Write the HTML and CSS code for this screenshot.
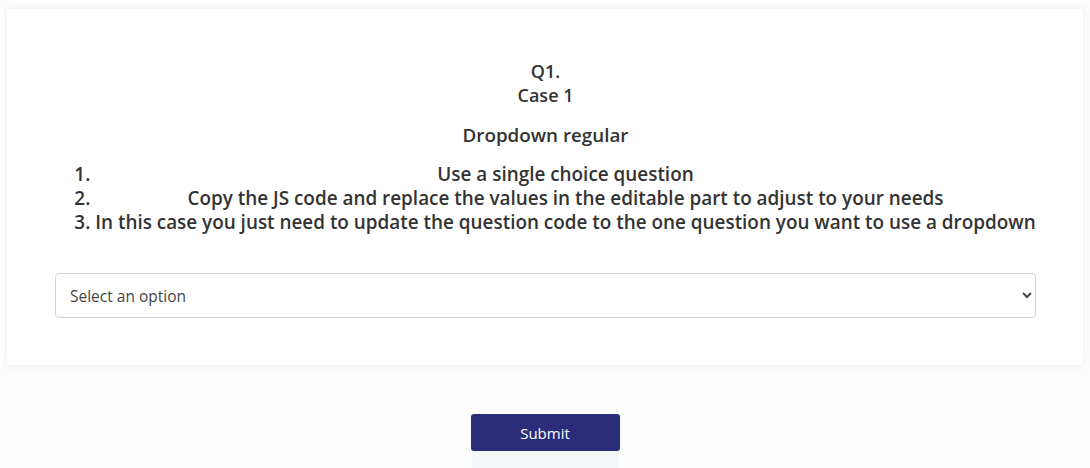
FILE: index.html
```html
<!DOCTYPE html>
<html lang="en">
<head>
    <meta charset="UTF-8">
    <meta name="viewport" content="width=device-width, initial-scale=1.0">
    <title>Q1. Case 1</title>
    <link rel="stylesheet" href="styles.css">
</head>
<body>
    <div class="card">
        <div class="question-title">
            <div>Q1.</div>
            <div>Case 1</div>
        </div>
        <div class="question-sub">Dropdown regular</div>
        <ol class="steps">
            <li>Use a single choice question</li>
            <li>Copy the JS code and replace the values in the editable part to adjust to your needs</li>
            <li>In this case you just need to update the question code to the one question you want to use a dropdown</li>
        </ol>
        <select class="dropdown">
            <option>Select an option</option>
            <option>Option 1</option>
            <option>Option 2</option>
        </select>
    </div>

    <div class="actions">
        <button class="submit">Submit</button>
        <div class="submit-shadow"></div>
    </div>
</body>
</html>
```

FILE: styles.css
```css
body {
    font-family: "Open Sans", "Noto Sans", sans-serif;
    margin: 0;
    padding: 9px 7px 0 7px;
    background-color: #fdfdfd;
    color: #333;
}
.card {
    background-color: #fff;
    box-shadow: 0 0 8px rgba(0, 0, 0, 0.08);
    padding: 50px 47px 0 48px;
    box-sizing: border-box;
    height: 356px;
}
.question-title,
.question-sub {
    text-align: center;
    font-size: 18px;
    font-weight: 600;
    line-height: 24px;
}
.question-sub {
    margin-top: 16px;
    font-size: 18.8px;
}
.steps {
    display: table;
    margin: 15px auto 0 auto;
    padding-left: 40px;
    font-size: 18.9px;
    font-weight: 600;
    line-height: 24px;
}
.steps li {
    text-align: center;
}
.dropdown {
    display: block;
    width: 100%;
    height: 45px;
    margin-top: 39px;
    padding: 0 10px;
    font-family: inherit;
    font-size: 15.5px;
    color: #444;
    background-color: #fff;
    border: 1px solid #d4d4d4;
    border-radius: 4px;
}
.actions {
    display: flex;
    flex-direction: column;
    align-items: center;
    margin-top: 49px;
}
.submit {
    width: 149px;
    height: 37px;
    background-color: #2a2c7a;
    color: #fff;
    border: none;
    border-radius: 3px;
    font-family: inherit;
    font-size: 15px;
    cursor: pointer;
}
.submit-shadow {
    width: 147px;
    height: 20px;
    background-color: #f4f8fb;
}
```
